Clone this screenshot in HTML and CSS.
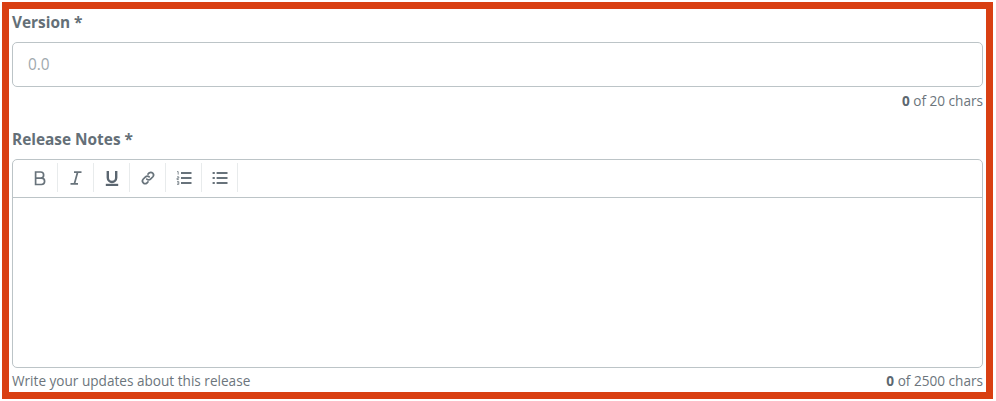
FILE: index.html
```html
<!DOCTYPE html>
<html>
<head>
    <link rel="stylesheet" href="styles.css">
</head>
<body>
    <div class="frame">
        <div class="field-label">Version *</div>
        <div class="text-input">0.0</div>
        <div class="field-footer field-footer-end">
            <span><b>0</b> of 20 chars</span>
        </div>

        <div class="field-label notes-label">Release Notes *</div>
        <div class="editor">
            <div class="toolbar">
                <span class="tool">
                    <svg width="16" height="16" viewBox="0 0 16 16" fill="none" stroke="#68737b" stroke-width="1.7"><path d="M3.6 2h5a3 3 0 0 1 0 6.1h-5zM3.6 8.1h5.8a3.2 3.2 0 0 1 0 6.4H3.6z"/></svg>
                </span>
                <span class="tool">
                    <svg width="16" height="16" viewBox="0 0 16 16" fill="none" stroke="#68737b" stroke-width="1.7"><path d="M6 2.2h7.5M2.5 13.8H10M9.6 2.2L6.4 13.8"/></svg>
                </span>
                <span class="tool">
                    <svg width="16" height="16" viewBox="0 0 16 16" fill="none" stroke="#5b6670" stroke-width="2.4"><path d="M3.8 1v6.8a4.2 4.2 0 0 0 8.4 0V1"/><path d="M1.8 15h12.4"/></svg>
                </span>
                <span class="tool">
                    <svg width="16" height="16" viewBox="0 0 16 16" fill="none" stroke="#68737b" stroke-width="1.7" stroke-linecap="round"><path d="M6.8 9.2a2.6 2.6 0 0 0 3.7 0l2.4-2.4a2.7 2.7 0 0 0-3.8-3.8L8 4.1"/><path d="M9.2 6.8a2.6 2.6 0 0 0-3.7 0L3.1 9.2A2.7 2.7 0 0 0 6.9 13L8 11.9"/></svg>
                </span>
                <span class="tool">
                    <svg width="16" height="16" viewBox="0 0 16 16" fill="none" stroke="#68737b"><path d="M5 3h10.5M5 8h10.5M5 13h10.5" stroke-width="1.9"/><path d="M1 1.6h1.2v3M1 6.8h1.8v1.4H1v1.4h1.8M1 11.6h1.8v2.8H1M1.2 13h1.4" stroke-width=".8"/></svg>
                </span>
                <span class="tool">
                    <svg width="16" height="16" viewBox="0 0 16 16" fill="none" stroke="#68737b" stroke-width="1.9"><path d="M4.6 3h10.9M4.6 8h10.9M4.6 13h10.9"/><path d="M.6 3h2.2M.6 8h2.2M.6 13h2.2" /></svg>
                </span>
            </div>
            <div class="editor-body"></div>
        </div>
        <div class="field-footer field-footer-help">
            <span>Write your updates about this release</span>
            <span><b>0</b> of 2500 chars</span>
        </div>
    </div>
</body>
</html>
```

FILE: styles.css
```css
body {
    margin: 0;
    padding: 2px 3px 2px 2px;
    background-color: #fff;
    font-family: "Open Sans", Arial, sans-serif;
    color: #5c6770;
}

.frame {
    box-sizing: border-box;
    height: 397px;
    border: 7px solid #d93f12;
    padding: 4px 3px 0;
    background-color: #fff;
}

.field-label {
    font-size: 15.4px;
    font-weight: 700;
    line-height: 20px;
    color: #646f77;
}

.notes-label {
    margin-top: 20px;
}

.text-input {
    box-sizing: border-box;
    height: 45px;
    margin-top: 9px;
    padding: 0 15px;
    border: 1px solid #bcc4c7;
    border-radius: 5px;
    font-size: 15.4px;
    line-height: 43px;
    color: #a0a9ae;
}

.field-footer {
    display: flex;
    justify-content: space-between;
    margin-top: 5px;
    font-size: 13.6px;
    line-height: 18px;
    color: #6c757c;
}

.field-footer b {
    color: #5c6770;
}

.field-footer-end {
    justify-content: flex-end;
}

.field-footer-help {
    margin-top: 4px;
}

.editor {
    box-sizing: border-box;
    height: 209px;
    margin-top: 9px;
    border: 1px solid #bcc4c7;
    border-radius: 5px;
    display: flex;
    flex-direction: column;
}

.toolbar {
    display: flex;
    height: 38px;
    padding: 3px 0 5px 9px;
    box-sizing: border-box;
    border-bottom: 1px solid #bcc4c7;
}

.tool {
    width: 36px;
    display: flex;
    align-items: center;
    justify-content: center;
    border-right: 1px solid #e8ebec;
    box-sizing: border-box;
}

.editor-body {
    flex: 1;
}
```
